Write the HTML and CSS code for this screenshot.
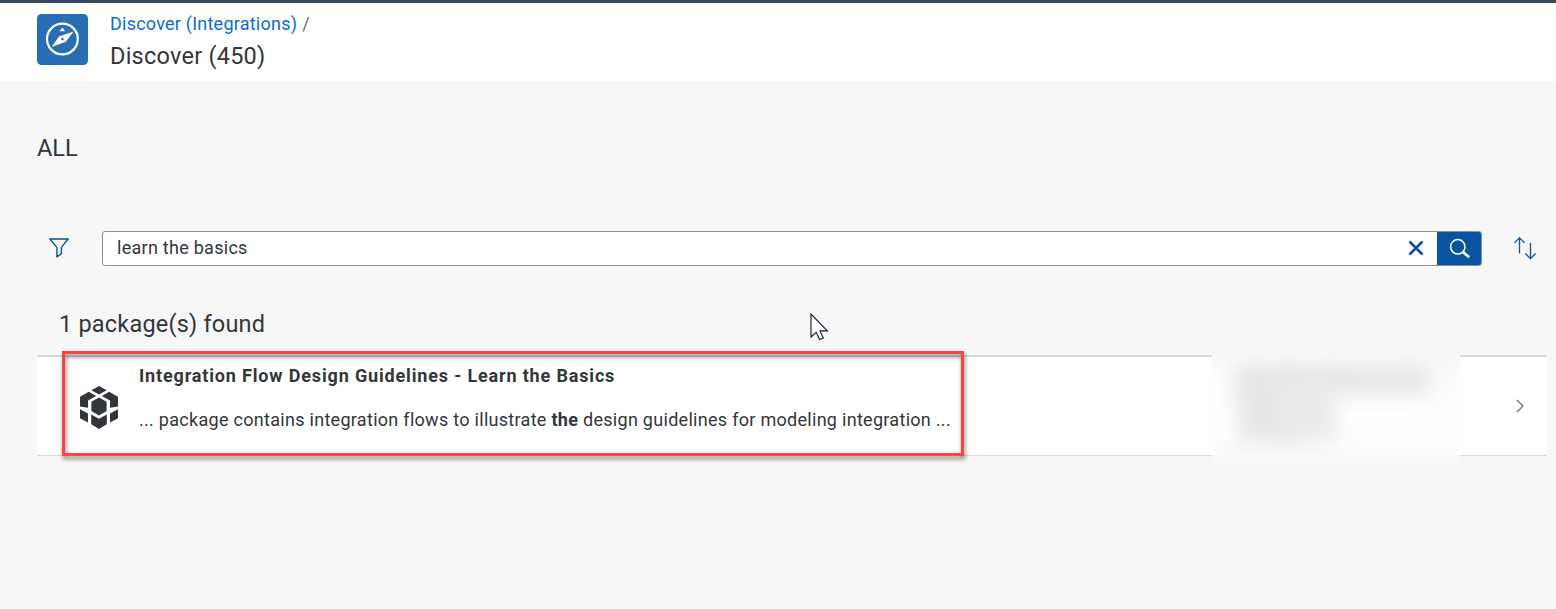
FILE: index.html
```html
<!DOCTYPE html>
<html lang="en">
<head>
<meta charset="utf-8">
<title>Discover (Integrations)</title>
<link rel="stylesheet" href="styles.css">
</head>
<body>
<header class="header">
  <svg class="logo" viewBox="0 0 51 51" width="51" height="51">
    <rect width="51" height="51" rx="4.5" fill="#286eb4"/>
    <circle cx="25.4" cy="25" r="15.4" fill="none" stroke="#fff" stroke-width="2.2"/>
    <path d="M25.3 13.4l2.8 3.8h-5.6z" fill="#fff"/>
    <path fill-rule="evenodd" d="M36.6 17.4L28.8 27.800 14.500 33 22 22.500zM25.4 23.800a1.300 1.300 0 1 0 0 2.600 1.300 1.300 0 0 0 0-2.600z" fill="#fff"/>
  </svg>
  <div class="titles">
    <nav class="crumbs"><a class="crumb-link" href="#">Discover (Integrations)</a><span class="slash">/</span></nav>
    <h1 class="page-title">Discover (450)</h1>
  </div>
</header>
<main class="content">
  <h2 class="section-title">ALL</h2>
  <div class="toolbar">
    <svg class="filter" viewBox="0 0 20 20" width="20" height="20"><path d="M.9 1h18.2L12.4 9.400v6.300L7.900 18.900V9.400z" fill="none" stroke="#0854a0" stroke-width="1.400" stroke-linejoin="round"/></svg>
    <div class="search">
      <span class="query">learn the basics</span>
      <svg class="clear" viewBox="0 0 16 16" width="16" height="16"><path d="M1.500 1.500l13 13M14.500 1.500l-13 13" stroke="#0854a0" stroke-width="2.600"/></svg>
      <div class="search-button">
        <svg viewBox="0 0 22 22" width="22" height="22"><circle cx="8.800" cy="8.800" r="7.200" fill="none" stroke="#fff" stroke-width="1.500"/><path d="M14 14l6.200 5.300" stroke="#fff" stroke-width="2.700"/></svg>
      </div>
    </div>
    <svg class="sort" viewBox="0 0 24 24" width="24" height="24"><path d="M6.500 17.500V1.800M1.400 6.900l5.100-5.100 5.100 5.100M17.500 7v15.600M12.400 17.500l5.100 5.100 5.100-5.100" fill="none" stroke="#0854a0" stroke-width="1.300"/></svg>
  </div>
  <h3 class="found">1 package(s) found</h3>
  <article class="package">
    <svg class="package-icon" viewBox="0 0 38 43" width="38" height="43" fill="#32363a">
      <path d="M19 0l7.600 4.300L19 8.600l-7.600-4.300z"/>
      <path d="M8.800 5.800l7.400 4.100-8.200 4.700v7.200L0 20.600V10.800zM29.200 5.800l-7.400 4.100 8.200 4.700v7.200l8-1.200V10.800z"/>
      <path d="M19 11.500l7.600 4.300v9.300L19 29.400l-7.600-4.300v-9.300z"/>
      <path d="M0 23.300l8 4.200v9L0 32.200zM38 23.300l-8 4.200v9l8-4.300zM11.200 28.500L19 32.800l7.800-4.300v9.800L19 43l-7.800-4.700z"/>
    </svg>
    <div class="package-text">
      <div class="package-name">Integration Flow Design Guidelines - Learn the Basics</div>
      <div class="package-desc">... package contains integration flows to illustrate <b>the</b> design guidelines for modeling integration ...</div>
    </div>
    <svg class="chevron" viewBox="0 0 8 14" width="8" height="14"><path d="M1 1l6 6-6 6" fill="none" stroke="#6a6d70" stroke-width="1.200"/></svg>
    <div class="redacted"><i class="smudge smudge-wide"></i><i class="smudge smudge-left"></i><i class="smudge smudge-right"></i></div>
    <div class="highlight"></div>
  </article>
</main>
<svg class="cursor" viewBox="0 0 19 28" width="19" height="28"><path d="M1 1v23l5.200-4.700 3.400 7.300 3.700-1.600-3.300-7.100h7.300z" fill="#fff" stroke="#15152a" stroke-width="1.100"/></svg>
</body>
</html>
```
FILE: styles.css
```css
* { box-sizing: border-box; }
body {
  margin: 0;
  height: 609px;
  overflow: hidden;
  background: #f7f7f7;
  color: #32363a;
  font-family: Roboto, "Noto Sans", sans-serif;
  font-size: 18px;
}
h1, h2, h3 { margin: 0; font-weight: 400; font-size: 23.5px; white-space: nowrap; }
.header {
  display: flex;
  gap: 22px;
  height: 81px;
  padding: 11px 0 0 37px;
  border-top: 3px solid #354a5f;
  background: #fff;
}
.crumbs { display: flex; gap: 5px; line-height: 20px; }
.crumb-link { color: #0a6ed1; text-decoration: none; letter-spacing: 0.23px; }
.slash { color: #6a6d70; }
.page-title { margin-top: 8px; line-height: 28px; letter-spacing: 0.24px; }
.content { padding: 53px 9px 0 37px; }
.section-title { line-height: 28px; }
.toolbar { display: flex; align-items: center; margin-top: 69px; padding-left: 12px; height: 35px; }
.filter { margin: 0 33px 1px 0; }
.search {
  display: flex;
  align-items: center;
  width: 1380px;
  height: 35px;
  border: 1px solid #89919a;
  border-radius: 3px;
  background: #fff;
}
.query { flex: 1; padding-left: 14px; line-height: 31px; margin-bottom: 2px; letter-spacing: 0.27px; }
.clear { margin: 0 13px 1px 0; }
.search-button {
  display: flex;
  align-items: center;
  justify-content: center;
  width: 44px;
  height: 33px;
  padding-left: 1px;
  background: #0854a0;
  border-radius: 0 2px 2px 0;
}
.sort { margin: 0 0 2px 31px; }
.found { margin: 44px 0 17px 22px; line-height: 28px; letter-spacing: 0.2px; }
.package {
  position: relative;
  display: flex;
  height: 101px;
  padding-left: 43px;
  border-top: 2px solid #d9d9d9;
  border-bottom: 1px solid #d9d9d9;
  background: #fff;
}
.package-icon { margin-top: 29px; }
.package-text { flex: 1; margin-left: 21px; padding-top: 7px; white-space: nowrap; }
.package-name { font-weight: 700; line-height: 24px; letter-spacing: 0.84px; }
.package-desc { margin-top: 20px; line-height: 24px; letter-spacing: 0.29px; }
.chevron { margin: 42px 23px 0 0; }
.redacted {
  position: absolute;
  left: 1175px;
  top: -4px;
  width: 248px;
  height: 111px;
  overflow: hidden;
  background: linear-gradient(#f8f8f8, #fdfdfd 30%, #fff 70%, #fafafa);
}
.smudge { position: absolute; background: #e5e6e6; filter: blur(10px); }
.smudge-wide { left: 25px; top: 12px; width: 192px; height: 30px; }
.smudge-left { left: 25px; top: 26px; width: 60px; height: 64px; }
.smudge-right { left: 66px; top: 26px; width: 58px; height: 64px; background: #e9eaea; }
.highlight {
  position: absolute;
  left: 25px;
  top: -6px;
  width: 902px;
  height: 105px;
  border: 3px solid #fb4343;
  filter: drop-shadow(1px 3px 2px rgba(0, 0, 0, 0.5));
}
.cursor { position: absolute; left: 810px; top: 313px; }
```
